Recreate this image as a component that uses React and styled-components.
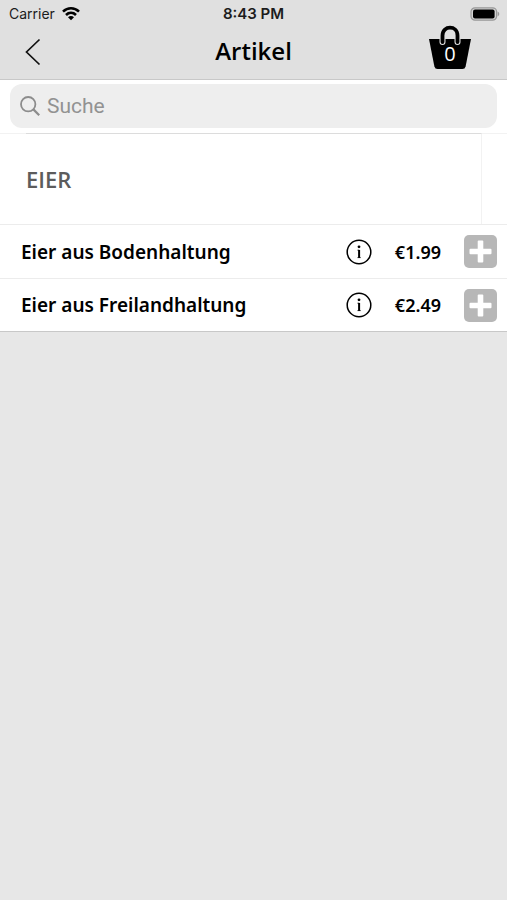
import React, { useState } from "react";
import styled, { createGlobalStyle } from "styled-components";

const GlobalStyle = createGlobalStyle`
  * {
    box-sizing: border-box;
  }

  body {
    margin: 0;
    background: #e7e7e7;
    color: #000;
    font-family: "Open Sans", "Noto Sans", sans-serif;
  }

  button {
    display: flex;
    align-items: center;
    justify-content: center;
    padding: 0;
    border: 0;
    background: none;
    color: inherit;
    font: inherit;
    cursor: pointer;
  }
`;

const Header = styled.header`
  background: #e0e0e0;
  border-bottom: 1px solid #c8c8c8;
`;

const StatusBar = styled.div`
  display: grid;
  grid-template-columns: 1fr auto 1fr;
  align-items: center;
  height: 24px;
  padding: 4px 7px 0;
  font-family: Inter, "Liberation Sans", sans-serif;
  font-size: 14px;
  line-height: 20px;
  color: #1c1c1c;
`;

const Carrier = styled.span`
  display: flex;
  align-items: center;
  gap: 7px;
  padding-left: 2px;
`;

const Time = styled.span`
  font-size: 15px;
  font-weight: 600;
`;

const Battery = styled.svg`
  justify-self: end;
`;

const NavBar = styled.nav`
  display: grid;
  grid-template-columns: 1fr auto 1fr;
  align-items: center;
  height: 55px;
  padding: 0 24px;
`;

const BackButton = styled.button`
  width: 18px;
  height: 28px;
`;

const Title = styled.h1`
  margin: 0;
  padding-bottom: 2px;
  font-size: 24px;
  font-weight: 600;
  line-height: 32px;
`;

const BasketButton = styled.button`
  display: grid;
  justify-self: end;
  align-self: start;
  width: 42px;
  height: 46px;
  margin-right: 12px;

  & > * {
    grid-area: 1 / 1;
  }
`;

const BasketCount = styled.span`
  align-self: end;
  justify-self: center;
  padding-bottom: 4px;
  font-size: 20px;
  line-height: 24px;
  color: #fff;
`;

const SearchBar = styled.div`
  padding: 4px 10px 5px;
  background: #fff;
`;

const SearchField = styled.label`
  display: flex;
  align-items: center;
  gap: 7px;
  height: 44px;
  padding: 0 10px;
  border-radius: 12px;
  background: #eee;
`;

const SearchInput = styled.input`
  flex: 1;
  min-width: 0;
  padding: 0;
  border: 0;
  outline: 0;
  background: none;
  font-family: Roboto, "Liberation Sans", sans-serif;
  font-size: 21px;
  line-height: 28px;

  &::placeholder {
    color: #929292;
    opacity: 1;
  }
`;

const Category = styled.section`
  background: #fff;
  border-bottom: 1px solid #c8c8c8;
`;

const CategoryHeader = styled.div`
  display: grid;
  grid-template-columns: 26px 1fr 25px;
  height: 91px;
`;

const CategoryEdge = styled.div`
  border-top: 1px solid #f2f2f2;
`;

const CategoryTitle = styled.h2`
  display: flex;
  align-items: center;
  margin: 0;
  border-top: 1px solid #dcdcdc;
  border-right: 1px solid #f2f2f2;
  font-size: 22px;
  font-weight: 600;
  line-height: 30px;
  color: #5c5c5c;
`;

const ArticleList = styled.ul`
  margin: 0;
  padding: 0;
  list-style: none;
`;

const ArticleRow = styled.li`
  display: flex;
  align-items: center;
  height: 54px;
  padding: 0 10px 0 21px;
  border-top: 1px solid #ececec;
  font-family: "Noto Sans", "Open Sans", sans-serif;
  font-size: 19px;
  font-weight: 600;
  line-height: 26px;

  & + & {
    height: 53px;
  }
`;

const ArticleName = styled.span`
  flex: 1;
`;

const InfoButton = styled.button`
  width: 26px;
  height: 26px;
`;

const Price = styled.span`
  width: 69px;
  text-align: right;
  font-size: 18px;
`;

const AddButton = styled.button`
  width: 33px;
  height: 33px;
  margin-left: 23px;
  border-radius: 5px;
  background: #b7b7b7;
`;

const articles = [
    { id: 1, name: "Eier aus Bodenhaltung", price: 1.99 },
    { id: 2, name: "Eier aus Freilandhaltung", price: 2.49 },
];

function WifiIcon() {
    return (
        <svg width="18" height="14" viewBox="0 0 18 14" fill="none" stroke="#000" strokeWidth="2.6" aria-hidden="true">
            <path d="M1 4.6C5.6 .2 12.4 .2 17 4.6" />
            <path d="M4 8C6.9 5.2 11.1 5.2 14 8" />
            <path d="M9 13.2L6 10.3C7.7 8.7 10.3 8.7 12 10.3Z" fill="#000" stroke="none" />
        </svg>
    );
}

function BatteryIcon() {
    return (
        <Battery width="30" height="14" viewBox="0 0 30 14" aria-hidden="true">
            <rect x="1" y=".8" width="25.6" height="12.4" rx="4" fill="#d4d4d4" stroke="#989898" strokeWidth="1.2" />
            <rect x="3" y="2.6" width="21.6" height="8.8" rx="2" fill="#000" />
            <path d="M27.6 4.6C29.8 5.4 29.8 8.6 27.6 9.4Z" fill="#989898" />
        </Battery>
    );
}

function BasketIcon() {
    return (
        <svg width="42" height="46" viewBox="0 0 42 46" fill="none" aria-hidden="true">
            <path d="M0 15H42L36.6 42.4Q36 45 33.4 45H8.6Q6 45 5.4 42.4Z" fill="#000" />
            <path d="M13.5 18V11.5C13.5 1 28.5 1 28.5 11.5V18" stroke="#e0e0e0" strokeWidth="6" strokeLinecap="round" />
            <path d="M13.5 18V11.5C13.5 1 28.5 1 28.5 11.5V18" stroke="#000" strokeWidth="3.8" strokeLinecap="round" />
        </svg>
    );
}

function App() {
    const [search, setSearch] = useState("");
    const [count, setCount] = useState(0);

    const visibleArticles = articles.filter((article) =>
        article.name.toLowerCase().includes(search.toLowerCase())
    );

    return (
        <>
            <GlobalStyle />
            <Header>
                <StatusBar>
                    <Carrier>
                        Carrier
                        <WifiIcon />
                    </Carrier>
                    <Time>8:43 PM</Time>
                    <BatteryIcon />
                </StatusBar>
                <NavBar>
                    <BackButton type="button" aria-label="Zurück">
                        <svg width="18" height="28" viewBox="0 0 18 28" fill="none" stroke="#111" strokeWidth="1.7">
                            <path d="M15.5 1.5L2.5 14L15.5 26.5" />
                        </svg>
                    </BackButton>
                    <Title>Artikel</Title>
                    <BasketButton type="button" aria-label="Warenkorb">
                        <BasketIcon />
                        <BasketCount>{count}</BasketCount>
                    </BasketButton>
                </NavBar>
            </Header>
            <SearchBar>
                <SearchField>
                    <svg width="20" height="20" viewBox="0 0 20 20" fill="none" stroke="#8c8c8c" strokeWidth="1.8" aria-hidden="true">
                        <circle cx="8.2" cy="8.2" r="7.2" />
                        <path d="M13.4 13.4L19.2 19.2" strokeWidth="2.2" />
                    </svg>
                    <SearchInput
                        type="text"
                        placeholder="Suche"
                        aria-label="Suche"
                        value={search}
                        onChange={(e) => setSearch(e.target.value)}
                    />
                </SearchField>
            </SearchBar>
            <Category>
                <CategoryHeader>
                    <CategoryEdge />
                    <CategoryTitle>EIER</CategoryTitle>
                    <CategoryEdge />
                </CategoryHeader>
                <ArticleList>
                    {visibleArticles.map((article) => (
                        <ArticleRow key={article.id}>
                            <ArticleName>{article.name}</ArticleName>
                            <InfoButton type="button" aria-label={`Info ${article.name}`}>
                                <svg width="26" height="26" viewBox="0 0 26 26" fill="none" stroke="#000">
                                    <circle cx="13" cy="13" r="11.8" strokeWidth="1.5" />
                                    <circle cx="13" cy="7.8" r="1.4" fill="#000" stroke="none" />
                                    <path d="M11.4 11.2H13M11.4 18.6H14.8" strokeWidth=".7" />
                                    <path d="M13.1 10.9V18.9" strokeWidth="2" />
                                </svg>
                            </InfoButton>
                            <Price>€{article.price.toFixed(2)}</Price>
                            <AddButton
                                type="button"
                                aria-label={`${article.name} hinzufügen`}
                                onClick={() => setCount(count + 1)}
                            >
                                <svg width="33" height="33" viewBox="0 0 33 33" fill="#fff">
                                    <rect x="13.7" y="5.5" width="5.6" height="22" rx="1" />
                                    <rect x="5.5" y="13.7" width="22" height="5.6" rx="1" />
                                </svg>
                            </AddButton>
                        </ArticleRow>
                    ))}
                </ArticleList>
            </Category>
        </>
    );
}

export default App;
